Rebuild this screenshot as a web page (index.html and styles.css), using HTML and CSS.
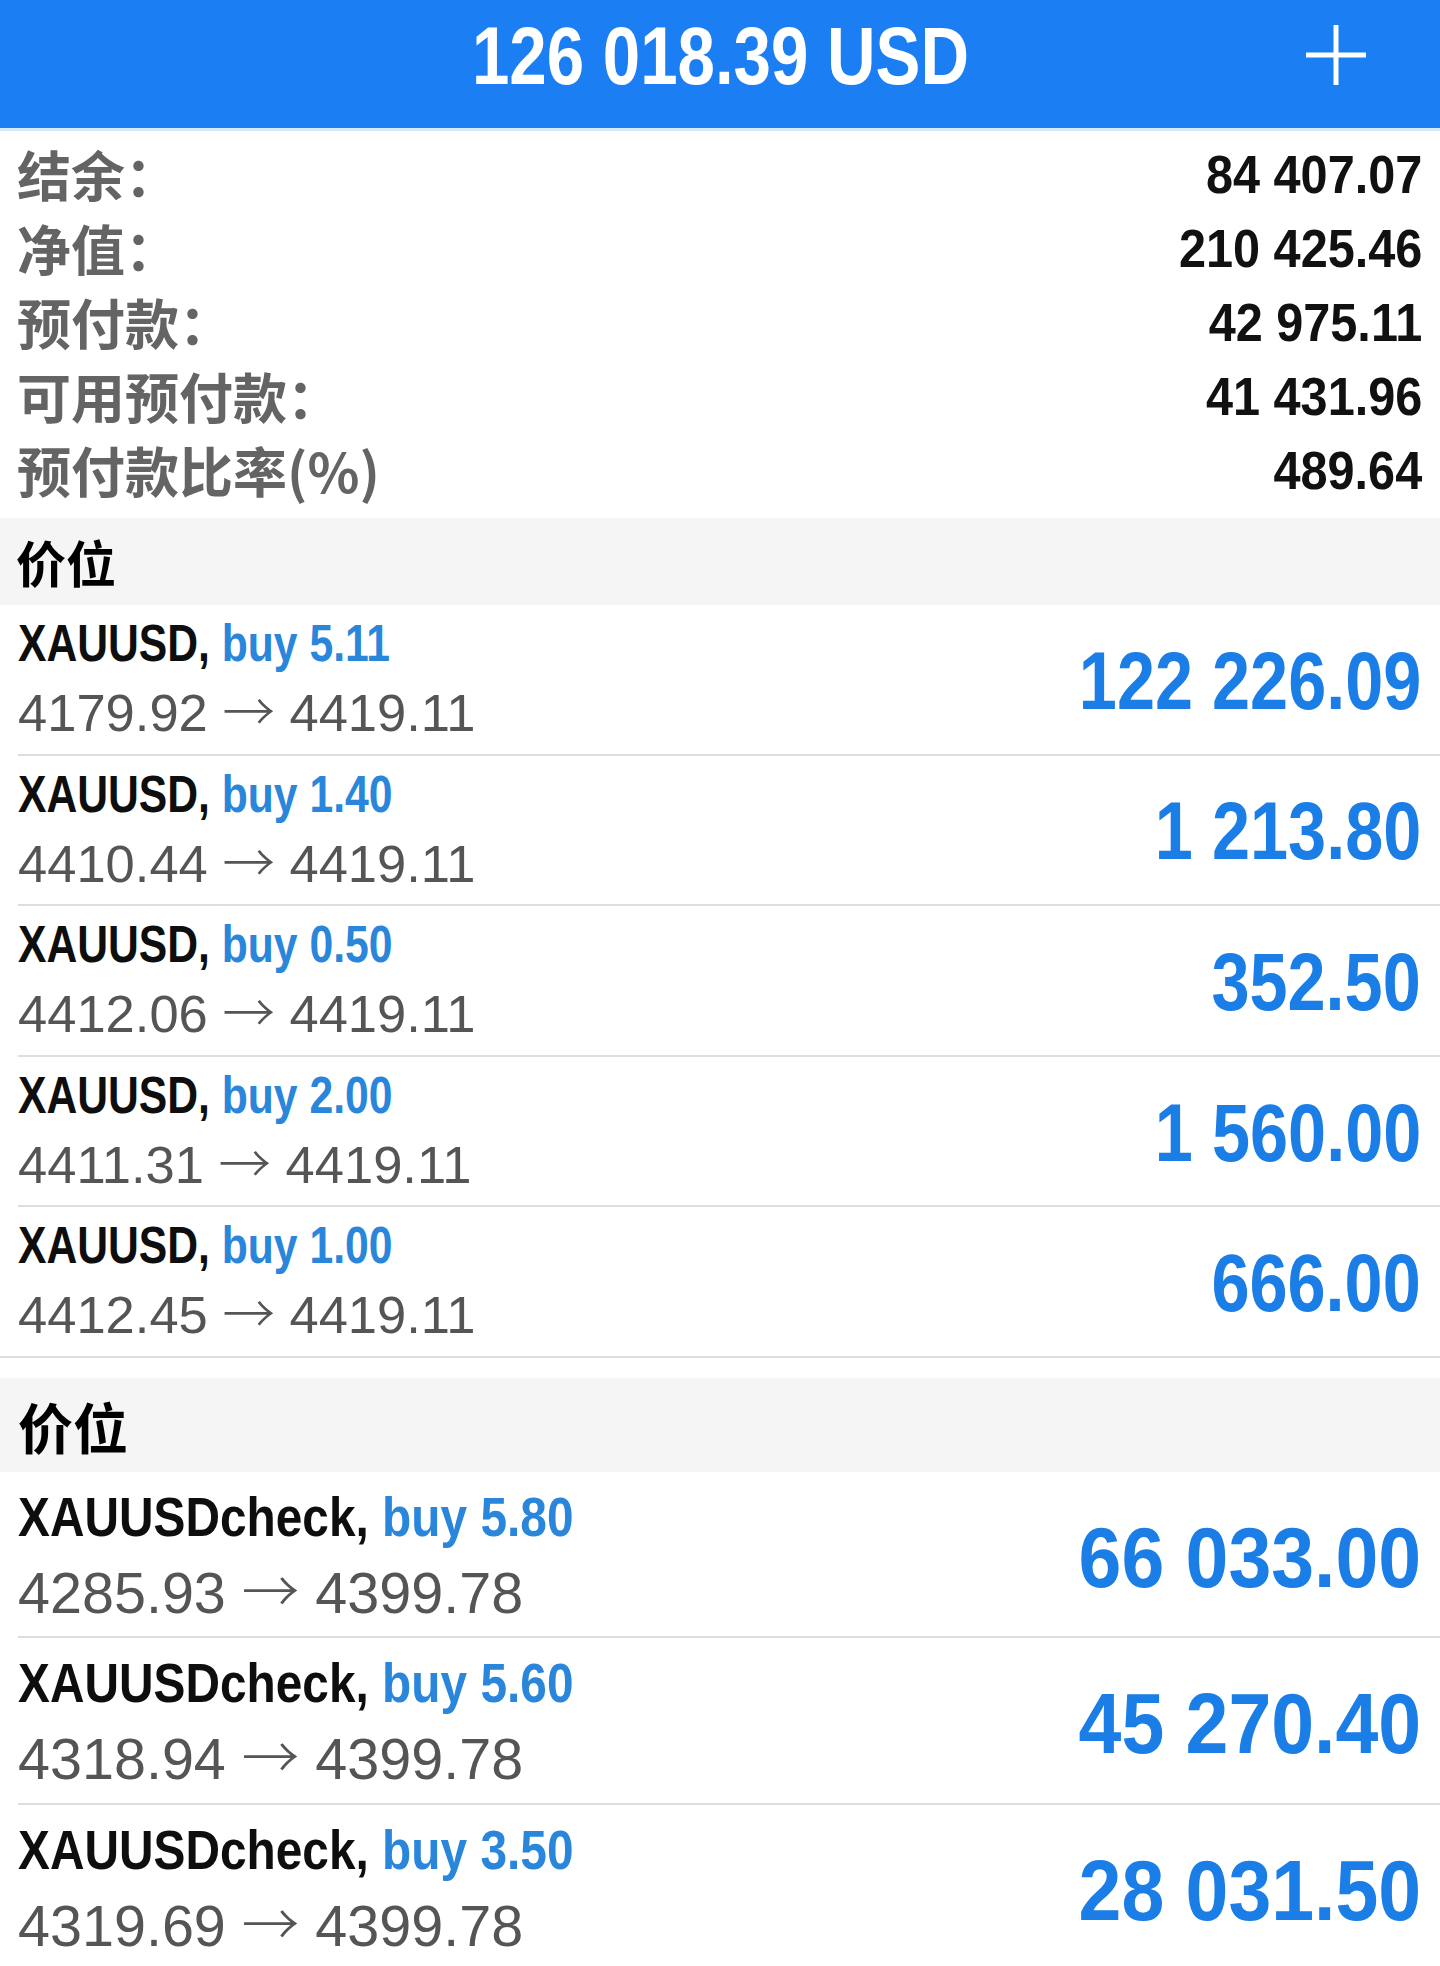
FILE: index.html
```html
<!DOCTYPE html>
<html lang="zh-CN">
<head>
<meta charset="utf-8">
<title>交易</title>
<link rel="stylesheet" href="styles.css">
</head>
<body>
<header class="topbar">
  <div class="balance"><span class="cond">126 018.39 USD</span></div>
  <div class="plus">
    <svg width="60" height="60" viewBox="0 0 60 60"><line x1="30" y1="0" x2="30" y2="60"/><line x1="0" y1="30" x2="60" y2="30"/></svg>
  </div>
</header>

<section class="summary">
  <div class="srow"><span class="label">结余：</span><span class="sval"><span class="cond">84 407.07</span></span></div>
  <div class="srow"><span class="label">净值：</span><span class="sval"><span class="cond">210 425.46</span></span></div>
  <div class="srow"><span class="label">预付款：</span><span class="sval"><span class="cond">42 975.11</span></span></div>
  <div class="srow"><span class="label">可用预付款：</span><span class="sval"><span class="cond">41 431.96</span></span></div>
  <div class="srow"><span class="label">预付款比率(%)</span><span class="sval"><span class="cond">489.64</span></span></div>
</section>

<section class="group g1">
  <div class="ghead">价位</div>
  <div class="pos"><div class="pos-body">
    <div class="info"><div class="title"><span class="cond">XAUUSD, <span class="buy">buy 5.11</span></span></div><div class="price">4179.92 <span class="arrow">→</span> 4419.11</div></div>
    <div class="profit"><span class="cond">122 226.09</span></div>
  </div></div>
  <div class="pos"><div class="pos-body">
    <div class="info"><div class="title"><span class="cond">XAUUSD, <span class="buy">buy 1.40</span></span></div><div class="price">4410.44 <span class="arrow">→</span> 4419.11</div></div>
    <div class="profit"><span class="cond">1 213.80</span></div>
  </div></div>
  <div class="pos"><div class="pos-body">
    <div class="info"><div class="title"><span class="cond">XAUUSD, <span class="buy">buy 0.50</span></span></div><div class="price">4412.06 <span class="arrow">→</span> 4419.11</div></div>
    <div class="profit"><span class="cond">352.50</span></div>
  </div></div>
  <div class="pos"><div class="pos-body">
    <div class="info"><div class="title"><span class="cond">XAUUSD, <span class="buy">buy 2.00</span></span></div><div class="price">4411.31 <span class="arrow">→</span> 4419.11</div></div>
    <div class="profit"><span class="cond">1 560.00</span></div>
  </div></div>
  <div class="pos last"><div class="pos-body">
    <div class="info"><div class="title"><span class="cond">XAUUSD, <span class="buy">buy 1.00</span></span></div><div class="price">4412.45 <span class="arrow">→</span> 4419.11</div></div>
    <div class="profit"><span class="cond">666.00</span></div>
  </div></div>
</section>

<section class="group g2">
  <div class="ghead">价位</div>
  <div class="pos"><div class="pos-body">
    <div class="info"><div class="title"><span class="cond">XAUUSDcheck, <span class="buy">buy 5.80</span></span></div><div class="price">4285.93 <span class="arrow">→</span> 4399.78</div></div>
    <div class="profit"><span class="cond">66 033.00</span></div>
  </div></div>
  <div class="pos"><div class="pos-body">
    <div class="info"><div class="title"><span class="cond">XAUUSDcheck, <span class="buy">buy 5.60</span></span></div><div class="price">4318.94 <span class="arrow">→</span> 4399.78</div></div>
    <div class="profit"><span class="cond">45 270.40</span></div>
  </div></div>
  <div class="pos"><div class="pos-body">
    <div class="info"><div class="title"><span class="cond">XAUUSDcheck, <span class="buy">buy 3.50</span></span></div><div class="price">4319.69 <span class="arrow">→</span> 4399.78</div></div>
    <div class="profit"><span class="cond">28 031.50</span></div>
  </div></div>
</section>
</body>
</html>
```
FILE: styles.css
```css
html, body {
  margin: 0;
  padding: 0;
  background: #ffffff;
  overflow: hidden;
}
body {
  width: 1440px;
  font-family: "Liberation Sans", Arial, "Noto Sans CJK SC", sans-serif;
}
.cond {
  display: inline-block;
  transform-origin: left center;
  white-space: nowrap;
}

/* top bar */
.topbar {
  height: 128px;
  background: #1b7ff3;
  border-bottom: 3px solid #d4eaf8;
  display: grid;
  grid-template-columns: 1fr auto 1fr;
  align-items: start;
}
.balance {
  grid-column: 2;
  font-weight: 700;
  font-size: 81px;
  line-height: 112px;
  color: #ffffff;
  white-space: nowrap;
}
.balance .cond {
  transform: scaleX(0.83);
  transform-origin: center center;
}
.plus {
  grid-column: 3;
  justify-self: end;
  margin-right: 74px;
  margin-top: 25px;
  width: 60px;
  height: 60px;
}
.plus svg {
  display: block;
  stroke: #ffffff;
  stroke-width: 5;
}

/* summary */
.summary {
  padding: 6px 18px 11px 17px;
}
.srow {
  display: flex;
  justify-content: space-between;
  align-items: center;
  height: 74px;
}
.label {
  font-family: "Noto Sans CJK SC", sans-serif;
  font-weight: 700;
  font-size: 54px;
  line-height: 74px;
  color: #646464;
  white-space: nowrap;
}
.sval {
  font-weight: 700;
  font-size: 54px;
  line-height: 74px;
  color: #111111;
}
.sval .cond {
  transform: scaleX(0.9);
  transform-origin: right center;
}

/* groups */
.ghead {
  background: #f5f5f5;
  font-family: "Noto Sans CJK SC", sans-serif;
  font-weight: 700;
  color: #000000;
}
.g1 .ghead {
  height: 87px;
  line-height: 87px;
  font-size: 50px;
  padding-left: 16px;
}
.g2 {
  margin-top: 20px;
}
.g2 .ghead {
  height: 94px;
  line-height: 94px;
  font-size: 55px;
  padding-left: 18px;
}

.pos {
  padding-left: 18px;
}
.pos.last {
  box-shadow: inset 0 -2px 0 #dedede;
}
.pos-body {
  display: flex;
  justify-content: space-between;
  box-sizing: border-box;
  border-bottom: 2px solid #dedede;
  padding-right: 19px;
}
.g1 .pos-body {
  height: 150.6px;
}
.g2 .pos-body {
  height: 166.5px;
}

.title {
  font-weight: 700;
  color: #0e0e0e;
  white-space: nowrap;
}
.g1 .title {
  font-size: 52px;
  line-height: 76px;
}
.g1 .title .cond {
  transform: scaleX(0.82);
}
.g2 .title {
  font-size: 56px;
  line-height: 90px;
}
.g2 .title .cond {
  transform: scaleX(0.854);
}
.buy {
  color: #2a86da;
}
.price {
  color: #555555;
  font-weight: 400;
  white-space: nowrap;
}
.arrow {
  font-family: "Noto Sans CJK SC", sans-serif;
  font-weight: 300;
  line-height: 0;
}
.g1 .price {
  font-size: 52.5px;
  line-height: 64px;
}
.g2 .price {
  font-size: 57.5px;
  line-height: 62px;
}

.profit {
  align-self: center;
  font-weight: 700;
  color: #1b7de6;
  white-space: nowrap;
  line-height: 1;
}
.profit .cond {
  transform-origin: right center;
}
.g1 .profit {
  font-size: 81px;
  padding-top: 4px;
}
.g1 .profit .cond {
  transform: scaleX(0.845);
}
.g2 .profit {
  font-size: 85px;
  padding-top: 6px;
}
.g2 .profit .cond {
  transform: scaleX(0.906);
}
```
